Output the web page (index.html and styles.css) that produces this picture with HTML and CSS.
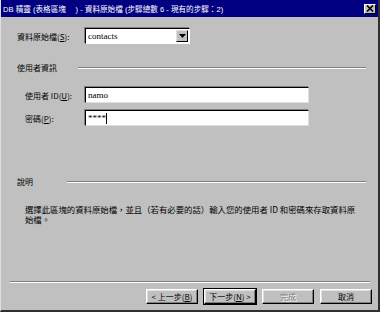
FILE: index.html
```html
<!DOCTYPE html>
<html lang="zh-TW">

<head>
    <meta charset="UTF-8">
    <title>DB 精靈</title>
    <link rel="stylesheet" href="styles.css">
</head>

<body>
    <div class="window">
        <div class="titlebar">
            <span class="title">DB 精靈 (表格區塊　 ) - 資料原始檔 (步驟總數 6 - 現有的步驟：2)</span>
            <span class="close">
                <svg width="8" height="7" viewBox="0 0 8 7">
                    <path d="M1 0.5 L7 6.5 M7 0.5 L1 6.5" stroke="#000" stroke-width="1.6" />
                </svg>
            </span>
        </div>

        <div class="content">
            <div class="row first">
                <label class="label" for="source">資料原始檔(<u>S</u>):</label>
                <div class="select" id="source">
                    <span class="select-text">contacts</span>
                    <span class="select-btn">
                        <svg width="7" height="4" viewBox="0 0 7 4"><path d="M0 0 H7 L3.5 4 Z" fill="#000" /></svg>
                    </span>
                </div>
            </div>

            <div class="section user-section">
                <span class="section-title">使用者資訊</span>
                <span class="line"></span>
            </div>

            <div class="row indent userid">
                <label class="label" for="userid">使用者 ID(<u>U</u>):</label>
                <div class="input" id="userid">namo</div>
            </div>
            <div class="row indent password">
                <label class="label" for="pwd">密碼(<u>P</u>):</label>
                <div class="input" id="pwd">****<span class="caret"></span></div>
            </div>

            <div class="section help-section">
                <span class="section-title">說明</span>
                <span class="line"></span>
            </div>
            <p class="desc">選擇此區塊的資料原始檔，並且（若有必要的話）輸入您的使用者 ID 和密碼來存取資料原始檔。</p>
        </div>

        <div class="footer">
            <div class="line"></div>
            <div class="buttons">
                <button>&lt; 上一步(<u>B</u>)</button>
                <button class="default">下一步(<u>N</u>) &gt;</button>
                <button class="disabled">完成</button>
                <button>取消</button>
            </div>
        </div>
    </div>
</body>

</html>
```

FILE: styles.css
```css
html,
body {
    margin: 0;
    padding: 0;
}

body {
    background-color: #c0c0c0;
    font-family: "Noto Sans CJK TC", sans-serif;
    font-size: 8px;
    color: #000;
}

.window {
    width: 380px;
    height: 312px;
    box-sizing: border-box;
    border-left: 1px solid #dfdfdf;
    border-right: 2px solid #303030;
    border-bottom: 2px solid #303030;
    display: flex;
    flex-direction: column;
}

.titlebar {
    height: 17px;
    flex: none;
    background-color: #000080;
    color: #fff;
    display: flex;
    align-items: center;
    padding: 0 2px 0 2px;
    font-family: "Liberation Sans", "Noto Sans CJK TC", sans-serif;
    font-size: 7.6px;
}

.title {
    flex: 1;
    white-space: nowrap;
}

.close {
    width: 12px;
    height: 10px;
    background-color: #c0c0c0;
    box-sizing: border-box;
    border: 1px solid;
    border-color: #fff #000 #000 #fff;
    display: flex;
    align-items: center;
    justify-content: center;
}

.content {
    flex: 1;
    padding-left: 16px;
}

.row {
    display: flex;
    align-items: center;
    height: 16px;
}

.first {
    margin-top: 11px;
}

.label {
    width: 68px;
    white-space: nowrap;
}

.indent {
    padding-left: 8px;
}

.indent .label {
    width: 60px;
}

.userid {
    margin-top: 13px;
}

.password {
    margin-top: 7px;
}

/* 下拉框 */
.select {
    width: 105px;
    height: 16px;
    box-sizing: border-box;
    background-color: #fff;
    border: 1px solid;
    border-color: #000 #fff #fff #000;
    box-shadow: -1px -1px 0 #808080;
    display: flex;
    align-items: center;
}

.select-text,
.input {
    font-family: "Liberation Serif", "Noto Sans CJK TC", serif;
    font-size: 9px;
}

.select-text {
    flex: 1;
    padding-left: 2px;
}

.select-btn {
    width: 12px;
    height: 12px;
    margin-right: 1px;
    box-sizing: border-box;
    background-color: #c0c0c0;
    border: 1px solid;
    border-color: #dfdfdf #000 #000 #dfdfdf;
    display: flex;
    align-items: center;
    justify-content: center;
}

.input {
    width: 224px;
    height: 16px;
    box-sizing: border-box;
    background-color: #fff;
    border: 1px solid;
    border-color: #000 #dfdfdf #dfdfdf #000;
    box-shadow: -1px -1px 0 #808080;
    padding-left: 2px;
    display: flex;
    align-items: center;
}

.caret {
    width: 1px;
    height: 11px;
    background-color: #000;
}

.section {
    display: flex;
    align-items: center;
    height: 13px;
    margin-right: 12px;
}

.user-section {
    margin-top: 17px;
}

.user-section .section-title {
    width: 61px;
}

.help-section {
    margin-top: 49px;
}

.help-section .section-title {
    width: 50px;
}

.line {
    flex: 1;
    height: 0;
    border-top: 1px solid #808080;
    border-bottom: 1px solid #fff;
}

.desc {
    margin: 16px 0 0 8px;
    width: 333px;
    font-size: 8.4px;
    line-height: 10px;
}

.footer {
    flex: none;
    padding: 0 6px 6px 9px;
}

.footer .line {
    margin-right: 2px;
}

.buttons {
    display: flex;
    justify-content: flex-end;
    gap: 6px;
    margin-top: 6px;
}

button {
    width: 52px;
    height: 15px;
    padding: 0;
    background-color: #c0c0c0;
    font-family: "Noto Sans CJK TC", sans-serif;
    font-size: 8px;
    color: #000;
    border: 1px solid;
    border-color: #fff #000 #000 #fff;
    box-shadow: inset -1px -1px 0 #808080, inset 1px 1px 0 #dfdfdf;
}

button.default {
    outline: 1px solid #000;
}

button.disabled {
    color: #808080;
    text-shadow: 1px 1px 0 #fff;
}
```
